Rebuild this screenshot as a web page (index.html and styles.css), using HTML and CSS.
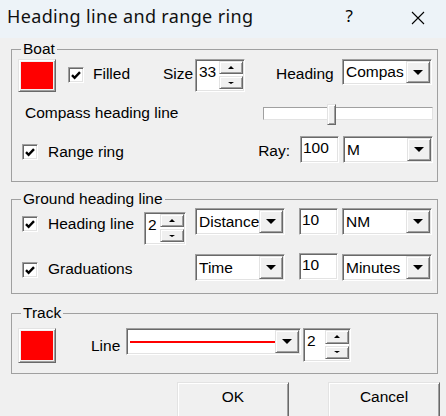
FILE: index.html
```html
<!DOCTYPE html>
<html>
<head>
<meta charset="utf-8">
<link rel="stylesheet" href="styles.css">
</head>
<body>
<div class="titlebar">
  <span class="title">Heading line and range ring</span>
  <span class="help">?</span>
  <svg class="close" width="14" height="14" viewBox="0 0 14 14"><path d="M1 1L13 13M13 1L1 13" stroke="#000" stroke-width="1.1" fill="none"/></svg>
</div>

<fieldset class="group boat">
  <legend>Boat</legend>
  <div class="row b1">
    <div class="colorbtn raised b1-color"><div class="swatch"></div></div>
    <span class="chk sunken b1-chk"><svg width="12" height="12" viewBox="0 0 12 12"><path d="M2 6.2L4.6 8.8L10 3.2" stroke="#000" stroke-width="2.4" fill="none"/></svg></span>
    <span class="lbl b1-filled">Filled</span>
    <span class="lbl b1-size">Size</span>
    <div class="spin sunken b1-spin"><span class="spin-text">33</span><div class="spin-btns"><span class="sb raised"><i class="up"></i></span><span class="sb raised"><i class="dn"></i></span></div></div>
    <span class="lbl b1-heading">Heading</span>
    <div class="combo sunken b1-combo"><span class="combo-text">Compas</span><span class="combo-btn raised"><i class="tri"></i></span></div>
  </div>
  <div class="row b2">
    <span class="lbl b2-label">Compass heading line</span>
    <div class="slider"><div class="track"></div><div class="thumb raised"></div></div>
  </div>
  <div class="row b3">
    <span class="chk sunken b3-chk"><svg width="12" height="12" viewBox="0 0 12 12"><path d="M2 6.2L4.6 8.8L10 3.2" stroke="#000" stroke-width="2.4" fill="none"/></svg></span>
    <span class="lbl b3-label">Range ring</span>
    <span class="lbl b3-ray">Ray:</span>
    <div class="edit sunken b3-edit">100</div>
    <div class="combo sunken b3-combo"><span class="combo-text">M</span><span class="combo-btn raised"><i class="tri"></i></span></div>
  </div>
</fieldset>

<fieldset class="group ground">
  <legend>Ground heading line</legend>
  <div class="row g1">
    <span class="chk sunken g1-chk"><svg width="12" height="12" viewBox="0 0 12 12"><path d="M2 6.2L4.6 8.8L10 3.2" stroke="#000" stroke-width="2.4" fill="none"/></svg></span>
    <span class="lbl g1-label">Heading line</span>
    <div class="spin sunken g1-spin"><span class="spin-text">2</span><div class="spin-btns"><span class="sb raised"><i class="up"></i></span><span class="sb raised"><i class="dn"></i></span></div></div>
    <div class="combo sunken g1-combo"><span class="combo-text">Distance</span><span class="combo-btn raised"><i class="tri"></i></span></div>
    <div class="edit sunken g-edit g1-edit">10</div>
    <div class="combo sunken g-unit g1-unit"><span class="combo-text">NM</span><span class="combo-btn raised"><i class="tri"></i></span></div>
  </div>
  <div class="row g2">
    <span class="chk sunken g2-chk"><svg width="12" height="12" viewBox="0 0 12 12"><path d="M2 6.2L4.6 8.8L10 3.2" stroke="#000" stroke-width="2.4" fill="none"/></svg></span>
    <span class="lbl g2-label">Graduations</span>
    <div class="combo sunken g2-combo"><span class="combo-text">Time</span><span class="combo-btn raised"><i class="tri"></i></span></div>
    <div class="edit sunken g-edit g2-edit">10</div>
    <div class="combo sunken g-unit g2-unit"><span class="combo-text">Minutes</span><span class="combo-btn raised"><i class="tri"></i></span></div>
  </div>
</fieldset>

<fieldset class="group track-group">
  <legend>Track</legend>
  <div class="row t1">
    <div class="colorbtn raised t1-color"><div class="swatch"></div></div>
    <span class="lbl t1-label">Line</span>
    <div class="combo sunken t1-combo"><span class="line-sample"><span class="line-red"></span></span><span class="combo-btn raised"><i class="tri"></i></span></div>
    <div class="spin sunken t1-spin"><span class="spin-text">2</span><div class="spin-btns"><span class="sb raised"><i class="up"></i></span><span class="sb raised"><i class="dn"></i></span></div></div>
  </div>
</fieldset>

<div class="actions">
  <button class="btn raised">OK</button>
  <button class="btn raised">Cancel</button>
</div>
</body>
</html>
```

FILE: styles.css
```css
* { box-sizing: border-box; }
html, body { margin: 0; height: 416px; overflow: hidden; }
body {
  background: #f0f0f0;
  font-family: "Liberation Sans", Arial, sans-serif;
  font-size: 15.5px;
  line-height: 18px;
  color: #000;
}

/* title bar */
.titlebar {
  height: 38px;
  background: #edf3f8;
  display: flex;
  align-items: flex-start;
}
.title {
  font-family: "Noto Sans", "Open Sans", sans-serif;
  font-size: 18px;
  letter-spacing: 0.35px;
  line-height: 22px;
  margin: 5px 0 0 7px;
  color: #111;
}
.help {
  font-family: "Noto Sans", "Open Sans", sans-serif;
  font-size: 17px;
  line-height: 22px;
  margin: 5px 0 0 auto;
}
.close { margin: 11px 21px 0 58px; }

/* 3D borders */
.sunken {
  background: #fff;
  border: 1px solid;
  border-color: #a0a0a0 #fff #fff #a0a0a0;
  box-shadow: inset 1px 1px 0 #696969, inset -1px -1px 0 #e3e3e3;
}
.raised {
  background: #f0f0f0;
  border: 1px solid;
  border-color: #e3e3e3 #696969 #696969 #e3e3e3;
  box-shadow: inset 1px 1px 0 #fff, inset -1px -1px 0 #a0a0a0;
}

/* group boxes */
.group {
  margin: 0 0 0 11px;
  width: 427px;
  padding: 0;
  border: 1px solid #a0a0a0;
  min-width: 0;
}
.group legend {
  padding: 0 2px;
  margin-left: 9px;
  line-height: 18px;
}
.boat { margin-top: 2px; }
.ground { margin-top: 8px; }
.track-group { margin-top: 10px; }

.row { display: flex; align-items: flex-start; }
.lbl { display: block; white-space: nowrap; }

/* controls */
.chk {
  width: 16px; height: 16px;
  display: flex; align-items: center; justify-content: center;
  flex: none;
}
.colorbtn { padding: 2px; flex: none; }
.swatch { width: 100%; height: 100%; background: #ff0000; }

.edit { padding: 2px 0 0 2px; line-height: 18px; flex: none; }

.combo { display: flex; padding: 1px; flex: none; }
.combo-text {
  flex: 1; min-width: 0; overflow: hidden; white-space: nowrap;
  display: flex; align-items: center; padding-left: 2px;
}
.combo-btn {
  width: 24px; flex: none;
  display: flex; align-items: center; justify-content: center;
}
.tri {
  width: 0; height: 0;
  border-left: 5px solid transparent;
  border-right: 5px solid transparent;
  border-top: 5px solid #000;
}

.spin { display: flex; padding: 1px; flex: none; }
.spin-text { flex: 1; padding: 2px 0 0 2px; line-height: 18px; }
.spin-btns {
  width: 24px; display: flex; flex-direction: column; gap: 2px; padding-bottom: 1px;
}
.sb { flex: 1; display: flex; align-items: center; justify-content: center; }
.up {
  width: 0; height: 0;
  border-left: 3px solid transparent;
  border-right: 3px solid transparent;
  border-bottom: 3px solid #000;
}
.dn {
  width: 0; height: 0;
  border-left: 3px solid transparent;
  border-right: 3px solid transparent;
  border-top: 2px solid #000;
}

.slider { position: relative; width: 170px; height: 21px; flex: none; }
.track {
  margin-top: 3px; height: 13px; background: #fff;
  border: 1px solid; border-color: #a0a0a0 #e3e3e3 #e3e3e3 #a0a0a0;
}
.thumb { position: absolute; left: 64px; top: 0; width: 9px; height: 21px; }

/* boat rows */
.b1 { height: 35px; }
.b1-color { margin: 1px 0 0 6px; width: 38px; height: 33px; }
.b1-chk { margin: 9px 0 0 12px; }
.b1-filled { margin: 7px 0 0 9px; width: 70px; }
.b1-size { margin-top: 7px; width: 32px; }
.b1-spin { margin-top: 1px; width: 50px; height: 33px; }
.b1-heading { margin: 7px 0 0 31px; width: 66px; }
.b1-combo { margin-top: 1px; width: 90px; height: 26px; }

.b2 { height: 40px; }
.b2-label { margin: 11px 0 0 13px; }
.slider { margin: 11px 4px 0 auto; }

.b3 { height: 48px; }
.b3-chk { margin: 11px 0 0 10px; }
.b3-label { margin: 10px 0 0 10px; }
.b3-ray { margin: 9px 0 0 auto; }
.b3-edit { margin: 3px 0 0 10px; width: 39px; height: 27px; }
.b3-combo { margin: 3px 4px 0 4px; width: 90px; height: 27px; }

/* ground rows */
.g1 { height: 40px; }
.g1-chk { margin: 8px 0 0 10px; }
.g1-label { margin: 7px 0 0 10px; width: 96px; }
.g1-spin { margin-top: 4px; width: 42px; height: 33px; }
.g1-combo { margin-left: 9px; width: 90px; height: 27px; }
.g-edit { margin-left: 14px; width: 39px; height: 27px; }
.g-unit { margin-left: 4px; width: 90px; height: 27px; }

.g2 { height: 45px; }
.g2-chk { margin: 14px 0 0 10px; }
.g2-label { margin: 12px 0 0 10px; width: 147px; }
.g2-combo { margin-top: 6px; width: 90px; height: 27px; }
.g2-edit { margin-top: 5px; }
.g2-unit { margin-top: 6px; }

/* track row */
.t1 { height: 51px; }
.t1-color { margin: 6px 0 0 6px; width: 38px; height: 35px; }
.t1-label { margin: 15px 0 0 35px; width: 35px; }
.t1-combo { margin-top: 6px; width: 175px; height: 27px; }
.line-sample { flex: 1; display: flex; align-items: center; padding-left: 2px; }
.line-red { display: block; width: 100%; height: 2px; background: #ff0000; }
.t1-spin { margin: 6px 0 0 2px; width: 48px; height: 34px; }

/* dialog buttons */
.actions { display: flex; gap: 39px; margin-top: 8px; padding-left: 177px; }
.btn {
  width: 112px; height: 40px;
  font-family: "Liberation Sans", Arial, sans-serif;
  font-size: 15.5px; line-height: 18px;
  padding: 5px 0 0 0;
  margin: 0;
  color: #000;
  display: flex; justify-content: center; align-items: flex-start;
}
```
